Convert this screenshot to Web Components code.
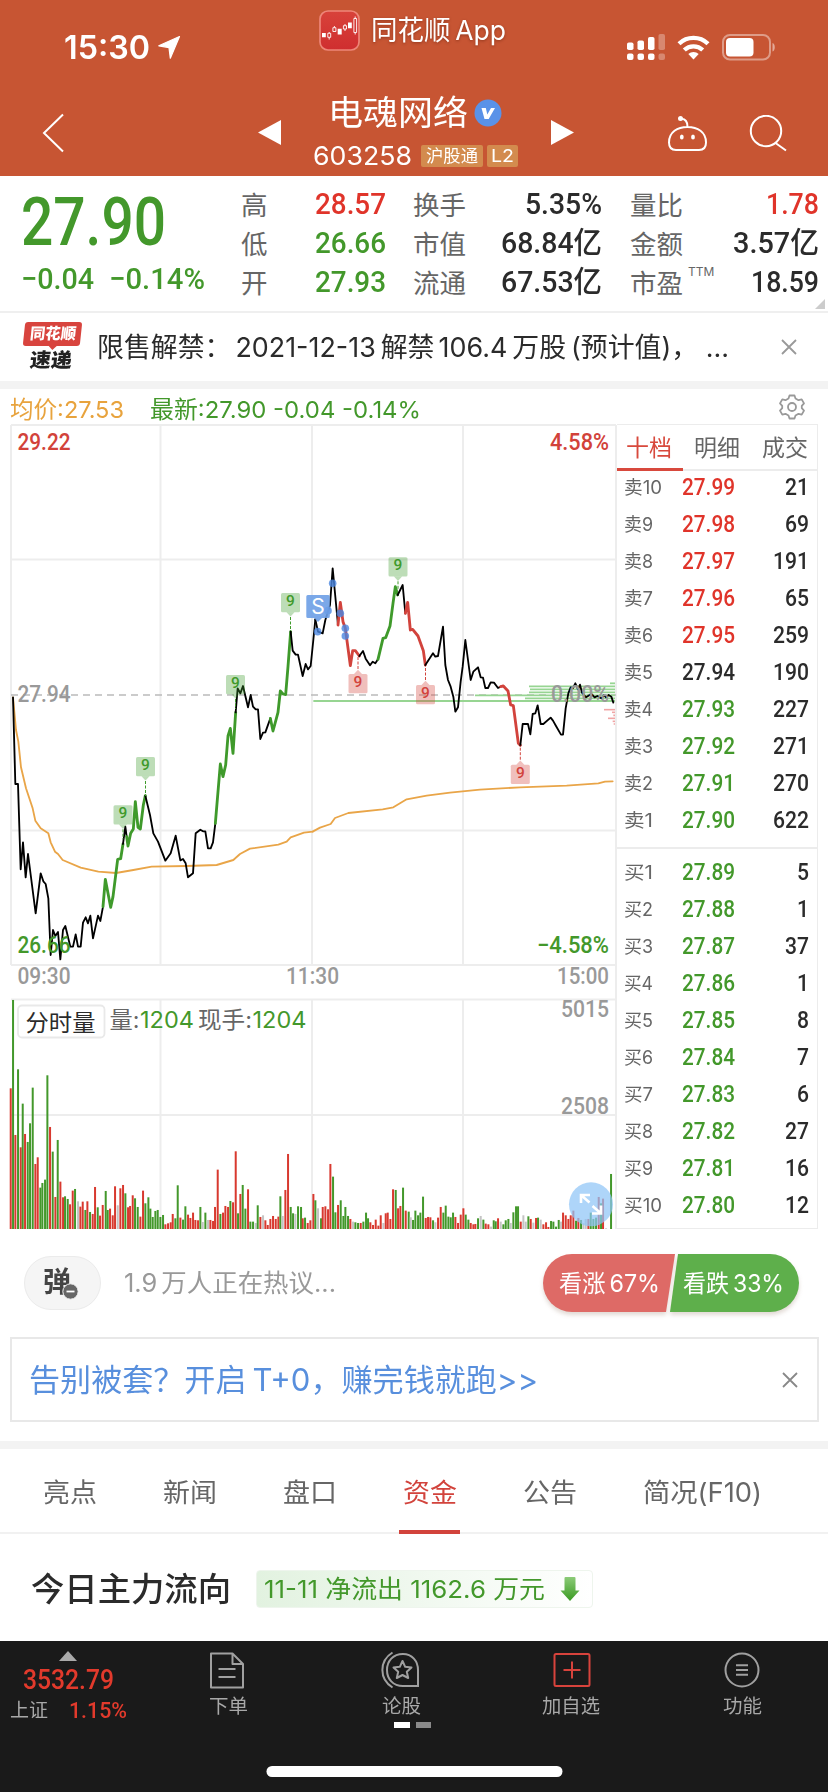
<!DOCTYPE html>
<html lang="zh-CN">
<head>
<meta charset="utf-8">
<title>电魂网络 603258</title>
<style>
html,body{margin:0;padding:0}
body{width:828px;height:1792px;overflow:hidden;background:#fff;
 --ui:Inter,"Noto Sans CJK SC",sans-serif;--num:Roboto,"Noto Sans CJK SC",sans-serif;
 --green:#43982b;--red:#e0342a;--line:#ececec;font-family:var(--ui);color:#2b2b2b}
</style>
</head>
<body>
<stock-page></stock-page>
<script>
class Piece extends HTMLElement{
  constructor(){
    super();
    this.attachShadow({mode:'open'}).innerHTML=
      '<style>*{box-sizing:border-box}svg{display:block;flex:none}.row{display:flex}fit-text{flex:none}'+this.css()+'</style>'+this.html();
  }
  css(){return ':host{display:block}'}
  html(){return ''}
}

/* whole screen, stacked top to bottom */
class StockPage extends Piece{
  css(){return `:host{display:flex;flex-direction:column;width:828px;height:1792px}
   .gap{height:8px;background:#f3f3f3;flex:none}.mid{display:flex;height:805px;flex:none}`}
  html(){return `<app-header></app-header><quote-panel></quote-panel><news-strip></news-strip><div class="gap"></div>
   <chart-legend></chart-legend><div class="mid"><price-chart></price-chart><order-book></order-book></div>
   <talk-bar></talk-bar><promo-box></promo-box><div class="gap" style="margin-top:19px"></div>
   <info-tabs></info-tabs><flow-row></flow-row><bottom-nav></bottom-nav>`}
}

class AppHeader extends Piece{
  css(){return `:host{display:block;height:176px;background:#c75533;color:#fff;flex:none}
   .a{height:82px;align-items:flex-start}.b{height:94px;align-items:flex-start}
   .t{line-height:40px;font-size:32px;font-weight:600;margin:28px 0 0 64px}
   .app{line-height:40px;font-size:27px;margin:11px 0 0 11px;text-shadow:0 1px 3px rgba(80,20,0,.45)}
   .name{line-height:40px;font-size:34.5px;font-weight:400}
   .c{width:208px;margin:11px 0 0 31px}.c .row:first-child{padding-left:16px}
   .code{line-height:24px;font-size:26px}.c .row+.row{margin-top:11px;align-items:center}
   .tag{background:#d38b4e;border-radius:2px;height:22px;line-height:22px;font-size:17.5px;display:flex;justify-content:center}`}
  html(){return `<div class="row a"><fit-text class="t" w="86">15:30</fit-text>
   <svg style="margin:35px 0 0 8px" width="23" height="24" viewBox="158 35 23 24"><path d="M179.5 36.5 158.8 45.8 169 47.6 170.3 58.2Z" fill="#fff" stroke="#fff" stroke-width="1.2" stroke-linejoin="round"/></svg>
   <svg style="margin:10px 0 0 138px" width="41" height="41" viewBox="319 10 41 41"><defs><linearGradient id="g" x2="0" y2="1"><stop stop-color="#d8423a"/><stop offset="1" stop-color="#cf2e2f"/></linearGradient></defs><rect x="320" y="11" width="39" height="39" rx="8" fill="url(#g)" stroke="#ee8679" stroke-width="1.700"/><g stroke="#fff" stroke-width=".9" fill="none"><path d="M329.200 32v1M329.200 37.500v2M334.400 26v1.500M345 24v1.500M345 29v2M355.200 16.500v2M355.200 32.500v2"/><path d="M327.800 33.300h2.900v4h-2.900zM332.900 27.700h3v3.800h-3zM343.400 25.700h3.100v3.300h-3.100zM353.900 18.500h2.700v14h-2.700z"/></g><path d="M322 33h3.800v4.300H322zM337.700 28.700h4v5.800h-4zM348 22.500h3.800v5.700H348z" fill="#fff"/></svg>
   <fit-text class="app" w="135">同花顺<span style="margin-left:5px">App</span></fit-text>
   <svg style="margin:32px 0 0 120px" width="150" height="30" viewBox="626 32 150 30"><g fill="#fff"><rect x="627" y="42.500" width="6.500" height="7.500" rx="1.800"/><rect x="637.500" y="40.500" width="6.500" height="9.500" rx="1.800"/><rect x="648" y="37" width="6.500" height="13" rx="1.800"/><rect x="658.500" y="34" width="6.500" height="16" rx="1.800" opacity=".3"/><rect x="627" y="53.500" width="6.500" height="6.500" rx="2"/><rect x="637.500" y="53.500" width="6.500" height="6.500" rx="2"/><rect x="648" y="53.500" width="6.500" height="6.500" rx="2"/><rect x="658.500" y="53.500" width="6.500" height="6.500" rx="2" opacity=".3"/><path d="M693.500 59.500 688.300 54a8 8 0 0 1 10.400 0z"/></g><g fill="none" stroke="#fff" stroke-width="4.300"><path d="M679 43.700a21 21 0 0 1 29 0"/><path d="M684.300 50a13.300 13.300 0 0 1 18.400 0"/></g><rect x="723" y="35" width="47" height="24.500" rx="7" fill="none" stroke="#fff" stroke-opacity=".42" stroke-width="2"/><rect x="726" y="38" width="27.500" height="18.500" rx="4" fill="#fff"/><path d="M772.500 43c3 1 3 7.500 0 8.500z" fill="#fff" opacity=".5"/></svg></div>
   <div class="row b">
   <svg style="margin:31px 0 0 42px" width="23" height="42" viewBox="42 113 23 42"><path d="M63 114.500 44 133 63 151.500" fill="none" stroke="#fff" stroke-width="2"/></svg>
   <svg style="margin:38px 0 0 193px" width="23" height="26" viewBox="0 0 23 26"><path d="M0 12.500 23 0v25z" fill="#fff"/></svg>
   <div class="c"><div class="row"><fit-text class="name" w="140">电魂网络</fit-text><svg style="margin:6px 0 0 6px" width="28" height="28" viewBox="0 0 28 28"><circle cx="14" cy="14" r="13.500" fill="#5a92e8"/><path d="M7.500 9h4.300l1.500 6.500 3.700-6.500h4l-6.300 11h-4.200z" fill="#fff"/></svg></div>
   <div class="row"><fit-text class="code" w="99" style="margin-left:1px">603258</fit-text><div class="tag" style="width:62px;margin-left:9px"><fit-text w="52">沪股通</fit-text></div><div class="tag" style="width:31px;margin-left:4px"><fit-text w="23">L2</fit-text></div></div></div>
   <svg style="margin:38px 0 0 31px" width="23" height="26" viewBox="0 0 23 26"><path d="M23 12.500 0 0v25z" fill="#fff"/></svg>
   <svg style="margin:33px 0 0 91px" width="125" height="38" viewBox="664 115 125 38"><g fill="none" stroke="#fff" stroke-width="2"><path d="M686.500 127c-10 0-18.500 5-18.500 15.500 0 5 2.500 7.500 7 7.500h23c4.500 0 7-2.500 7-7.500 0-10.500-8.500-15.500-18.500-15.500zM686.500 127c0-5.500-1.500-8-6-8.200"/><circle cx="765" cy="131" r="15.200"/><path d="M774.500 143 785 150.500"/></g><circle cx="679.500" cy="118.500" r="2.500" fill="#fff"/><g fill="#fff"><ellipse cx="680.800" cy="137" rx="1.900" ry="2.600"/><ellipse cx="692" cy="137" rx="1.900" ry="2.600"/></g></svg></div>`}
}

class QuotePanel extends Piece{
  css(){return `:host{display:flex;height:137px;border-bottom:2px solid #efefef;flex:none;position:relative;font-family:var(--num);font-weight:500}
   .l{width:241px;padding:9px 0 0 21px;color:var(--green)}
   .big{font-size:66px;line-height:76px}.chg{font-size:30px;line-height:36px;margin-top:0}.l .row{gap:15px}
   .g{padding-top:9px}.g div{display:flex;justify-content:space-between;height:38.8px;line-height:38.800px;font-size:30px}
   .g span{font:400 26.5px/38.800px var(--ui);color:#666;padding-top:1px;white-space:nowrap}
   sup{font-size:12px;line-height:12px;vertical-align:17px;margin-left:5px}
   i{position:absolute;right:3px;bottom:2px;border:5px solid transparent;border-right-color:#ccc;border-bottom-color:#ccc}
   .r{color:var(--red)}.n{color:var(--green)}`}
  html(){
    const g=(x,w,rows)=>`<div class="g" style="width:${w}px;margin-left:${x}px">`+rows.map(r=>`<div><span>${r[0]}</span><fit-text class="${r[3]||''}" w="${r[2]}">${r[1]}</fit-text></div>`).join('')+'</div>';
    return `<div class="l"><fit-text class="big" w="145">27.90</fit-text><div class="row chg"><fit-text w="73">−0.04</fit-text><fit-text w="96">−0.14%</fit-text></div></div>`+
    g(0,145,[['高','28.57',71,'r'],['低','26.66',71,'n'],['开','27.93',71,'n']])+
    g(27,189,[['换手','5.35%',77],['市值','68.84亿',101],['流通','67.53亿',101]])+
    g(28,189,[['量比','1.78',53,'r'],['金额','3.57亿',86],['市盈<sup>TTM</sup>','18.59',68]])+'<i></i>'}
}

class NewsStrip extends Piece{
  css(){return `:host{display:flex;height:68px;flex:none;align-items:center}
   .logo{width:58px;height:50px;margin-left:24px}
   .up{height:24px;width:57px;background:#d8443e;transform:skewX(-6deg);border-radius:3px;color:#fff;font:900 15.500px/24px var(--ui);display:flex;justify-content:center;position:relative}
   .up:after{content:"";position:absolute;left:26px;top:24px;border:4px solid transparent;border-top-color:#d8443e;border-bottom:0}
   .dn{font:900 19.5px/22px var(--ui);color:#222;transform:skewX(-6deg);margin:3px 0 0 6px}
   .txt{font-size:27px;line-height:40px;margin:1px 0 0 15px}b{font-weight:400;margin:0 5px 0 4px}`}
  html(){return `<div class="logo"><div class="up"><fit-text w="46">同花顺</fit-text></div><fit-text class="dn" w="42">速递</fit-text></div>
   <fit-text class="txt" w="632">限售解禁：<b>2021-12-13</b>解禁<b>106.4</b>万股<span style="margin-left:5px">(预计值)，</span> ...</fit-text>
   <svg style="margin-left:51px" width="18" height="18" viewBox="0 0 18 18"><path d="M2 2 16 16M16 2 2 16" stroke="#999" stroke-width="1.800"/></svg>`}
}

class ChartLegend extends Piece{
  css(){return `:host{display:flex;height:35px;flex:none;font-size:23.500px;line-height:42px;padding-left:10px;color:var(--green)}`}
  html(){return `<fit-text w="114" style="color:#e8a33d">均价:27.53</fit-text><fit-text w="271" style="margin-left:26px">最新:27.90 -0.04 -0.14%</fit-text>
   <svg style="margin:4px 0 0 357px" width="28" height="28" viewBox="-14 -14 28 28"><g fill="none" stroke="#999" stroke-width="1.800" stroke-linejoin="round"><path d="M-2.500-11.500h5l1 3 3 1.700 3.200-.8 2.300 4-2.200 2.400v2.400l2.200 2.400-2.300 4-3.200-.8-3 1.700-1 3h-5l-1-3-3-1.700-3.200.8-2.300-4 2.200-2.400v-2.400l-2.200-2.400 2.300-4 3.200.8 3-1.700z"/><circle r="4"/></g></svg>`}
}

class PriceChart extends Piece{
  css(){return `:host{display:block;width:617px;height:805px;flex:none}
   text{font-family:var(--num);font-weight:500;font-size:23.500px}.ui{font-family:var(--ui);font-weight:400;font-size:23px}`}
  html(){
    // traces are drawn in three-times units; the origin differs for each block
    const K='#000',G='#3f9a2b',R='#d2433c';
    const L=(c,p,w)=>`<polyline points="${p}" stroke="${c}" stroke-width="${w||(c==K?5.5:8.5)}"/>`;
    const blk=(x,y,s)=>`<g transform="translate(${x} ${y}) scale(.33333)" fill="none" stroke-linejoin="round" stroke-linecap="round">${s}</g>`;
    const left=blk(0,680,
     L('#e9a548','39,52 48,150 55,185 63,262 78,325 98,385 106,422 122,445 145,460 152,487 165,515 174,522 188,540 242,563 295,575 348,579 400,570 455,560 560,558 650,555 700,540 720,522 750,506 835,494 860,485 872,472 912,458 938,455',5.5)+
     L(K,'39,52 46,312 54,312 62,568 69,487 77,592 84,522 107,700 122,580 130,604 137,612 145,655 152,825 159,750 166,768 174,756 181,838 189,750 196,738 211,800 219,800 227,763 234,800 242,800 249,728 257,712 264,730 271,707 279,775 294,707 301,723 309,680')+
     L(G,'309,680 316,598 332,682 339,650 353,538 362,536 369,492')+L(K,'369,492 376,440 380,470')+
     L(G,'380,470 384,498 392,460 400,447 406,365 414,442 421,447 430,375 436,347')+
     L(K,'436,347 450,405 460,460 474,485 496,542 512,520 527,467 541,541 549,537 557,550 564,592 579,580 587,460 601,449 609,454 616,454 624,505 632,505 639,487 646,430')+
     L(G,'646,430 661,252 669,290 677,255 684,168 691,145 699,220 707,97')+
     L(K,'707,97 713,25 721,40 729,18 744,82 752,45 759,80 767,88 774,88 781,177 789,158 796,157 811,115')+
     L(G,'811,115 819,153 834,97 841,33 849,42 857,44 864,-40 872,-145')+
     L(K,'872,-145 878,-88 887,-76 894,-76 908,-12 917,-48 924,-32 932,-42 940,-120 946,-182'));
    const right=blk(300,420,
     L('#e9a548','38,1235 60,1223 92,1212 105,1194 145,1179 248,1168 280,1162 300,1150 320,1138 380,1127 450,1118 540,1109 660,1102 800,1097 895,1090 915,1085 938,1084',5.5)+
     L(K,'46,598 54,635 68,640 76,600 90,555 98,445 114,615')+L(R,'114,615 121,547 129,605 136,625 151,737 158,692 166,692 178,708')+
     L(K,'178,708 189,693 197,716 210,736 218,725 226,730 234,718')+L(G,'234,718 249,655 257,653 270,618 279,550 286,500 293,525')+
     L(K,'293,525 308,495 316,580')+L(R,'316,580 323,547 331,630 338,628 354,648 370,692 376,735')+
     L(K,'376,735 399,700 406,710 414,708 429,620 436,735 444,780 452,800 460,830 466,875 474,862 482,785 488,740 496,660 512,780 520,755 534,742 542,772 549,773 556,804 564,804 572,787 582,788 594,804 602,800')+
     L(R,'602,800 610,798 624,813 632,855 640,857 655,970 661,976')+
     L(K,'661,976 668,912 684,912 691,943 698,882 706,880 713,856 722,912 730,912 752,893 759,902 768,918 783,944 789,944 797,865 805,820 812,802 819,804 826,790 834,808 840,794 846,818 858,832 874,822 884,832 892,828 905,835 912,825 918,832 926,825 934,830 940,848'));
    const dots=[[53,635],[98,490],[84,572],[121,580],[136,625],[136,648]].map(d=>`<circle cx="${300+d[0]/3}" cy="${420+d[1]/3}" r="3.800" fill="#4a86e0" fill-opacity=".8"/>`).join('');
    const tip=(x,y,up,len)=>{const c=up?'#3f9a2b':'#d2433c',m=up?y+19:y;
      return `<rect x="${x-9.5}" y="${y}" width="19" height="19.300" rx="1.500" fill="${c}" fill-opacity=".34"/>`+
       (up?`<path d="M${x-4} ${m+.3}h8l-4 4.300z" fill="${c}" fill-opacity=".34"/><path d="M${x} ${m+5}v${len}" stroke="${c}" stroke-dasharray="3 1.500"/>`:
        `<path d="M${x-4} ${m}h8l-4-4.300z" fill="${c}" fill-opacity=".34"/><path d="M${x} ${m-5}v${-len}" stroke="${c}" stroke-dasharray="3 1.500"/>`)+
       `<text x="${x}" y="${y+13}" text-anchor="middle" style="font-size:15.5px" fill="${c}">9</text>`};
    const tips=tip(290.500,593,1,14)+tip(235.500,675,1,10)+tip(145.500,757,1,15)+tip(123,805.300,1,10)+tip(398,557.300,1,8)+tip(358,674,0,12)+tip(425.500,685,0,14)+tip(520.300,764.700,0,14);
    const ob='<g stroke="#97d592" stroke-width="1.800">'+[[40,843],[525,826],[687,799],[690,808],[687,817],[675,835],[930,790]].map(d=>`<path d="M${300+d[0]/3} ${420+d[1]/3}H615"/>`).join('')+'</g><g stroke="#f0a5a5" stroke-width="1.600">'+[[912,869],[936,877],[940,886],[924,895],[938,904],[941,912]].map(d=>`<path d="M${300+d[0]/3} ${420+d[1]/3}H615"/>`).join('')+'</g>';
    const v1='32r325 39g60 46r465 54g268 62r502 68g371 75r462 83g486 90g430 98g323 106r552 113r532 121g623 127g609 135g599 142g286 150r441 158g515 166r651 173g480 181r605 189r652 195g649 203g657 210r673 218r632 225g627 234y664 241r680 248r665 256g690 262r664 270g696 278r702 285r621 293g682 300r707 308r675 317g633 323g690 330r686 338r706 345r619 353y676 361r625 369r615 376g640 384r682 390r678 398r646 405g655 413g681 421r710 429r632 436g670 445g652 451g686 458g711 466g693 473g690 481g711 489g705 496r733 504r730 512r727 518r702 526g715 533g616 541r713 549g719 556g679 564r704 571r714 579r698 586r720 594r721 601g681 608y726 616g698 624y720 631r720 639r723 645r681 653r569 661g702 669r698 676r678 684r681 691g663 699r667 707r514 714g700 721r642 728g615 736g686 744r628 751g725 759g725 767y729 773g676 781r711 789y706 796r721 803r735 811r717 819r708 827r717 835r710 841g649 848y708 856r630 864r522 872g681 879g700 886y702 894g679 903g681 908r715 915g713 923r729 931r721';
    const v2='40r642 46g661 54y685 63g715 68r681 76r679 84r688 91r552 99g590 106g697 114r675 122g661 130g708 136g681 144g708 151r717 159y725 166g727 174g729 182r729 190g725 198g698 204g715 211r727 219r735 227r719 235r737 242r706 250y729 257r700 263r698 271r717 279r628 287g630 294r685 301r678 309g623 317r692 326g695 332y712 339g720 346g692 354g706 361g698 369g650 377r714 384r711 391r712 399g721 406y727 414r713 422r681 430g698 437g677 445g710 452g712 459g698 466r711 474r729 482r704 490r685 497g704 505g719 512r729 520r733 526r732 534g715 542y708 550g719 557r731 565r733 573y740 581g721 587g724 594r715 602y725 610g733 617g721 625g717 632y729 640g697 648g679 654g679 662r725 670y706 677y725 685g709 692r717 700y728 708r714 714g713 722y719 730r733 738r727 745r741 753g723 760g725 768g740 776g720 783y725 789r698 797r706 805r717 812r706 820r692 828g722 835r714 843g720 850y730 857y717 865r717 872g698 880g717 888g713 896r651 903g670 909r656 918y745 933g582';
    const bars=(s,x0)=>s.split(' ').map(b=>{const m=b.match(/(\d+)([rgy])(\d+)/),h=(748-m[3])/3;
      return `<rect x="${(x0+m[1]/3-.95).toFixed(2)}" y="${(1229.300-h).toFixed(2)}" width="2" height="${h.toFixed(2)}" fill="${{r:'#d8392f',g:'#43982b',y:'#c4c4c4'}[m[2]]}"/>`}).join('');
    const T=(x,y,w,t,c,k='')=>`<text x="${x}" y="${y}" textLength="${w}" lengthAdjust="spacingAndGlyphs" fill="${c}" class="${k}">${t}</text>`;
    const g='#999';
    return `<svg width="617" height="805" viewBox="0 424 617 805">
     <g stroke="#ededed" stroke-width="2" fill="none"><path d="M11 425H616M11 559.500H616M11 830.500H616M11 965H616M11 425V965M160.500 425V965M312 425V965M463 425V965M616 425V1229M11 999.500H616M11 1115H616M160.500 999V1229M312 999V1229M463 999V1229"/></g>
     <path d="M11 695H616" stroke="#bbb" stroke-width="1.500" stroke-dasharray="7 5"/>
     ${ob}${left}${right}${dots}${tips}
     <path d="M307.800 595h20.500a1.500 1.500 0 0 1 1.500 1.500v20a1.500 1.500 0 0 1-1.500 1.500H322l-4 4-4-4h-6.200a1.500 1.500 0 0 1-1.500-1.500v-20a1.500 1.500 0 0 1 1.500-1.500z" fill="#6d9fe6" fill-opacity=".9"/>
     <text class="ui" x="318" y="614" text-anchor="middle" style="font-size:21px" fill="#fff">S</text>
     ${T(17.500,450.300,53,'29.22','#d2423a')}${T(550,450.300,59,'4.58%','#d2423a')}${T(17.500,702.300,53,'27.94',g)}${T(551,702.300,58,'0.00%',g)}
     ${T(17.500,953.300,53,'26.66','#43982b')}${T(537,953.300,72,'−4.58%','#43982b')}${T(17.500,984.200,53,'09:30',g)}${T(286,984.200,53,'11:30',g)}${T(557,984.200,52,'15:00',g)}
     ${bars(v1,0)}${bars(v2,300)}
     ${T(561,1017.300,48,'5015',g)}${T(561,1114.300,48,'2508',g)}
     <rect x="18" y="1005.500" width="86.500" height="32" rx="4" fill="#fff" stroke="#e9e9e9" stroke-width="1.800"/>
     ${T(25.500,1030.500,70,'分时量','#2b2b2b','ui')}${T(109.500,1028,30,'量:','#666','ui')}${T(140,1028,54,'1204','#43982b','ui')}${T(198,1028,54,'现手:','#666','ui')}${T(252.500,1028,54,'1204','#43982b','ui')}
     <circle cx="591" cy="1204.300" r="22" fill="#8fc5f6" fill-opacity=".72"/>
     <g fill="none" stroke="#fff" stroke-width="2.600"><path d="M581 1203v-8h9M581.500 1195.500l8 7M601 1205.500v8h-9M600.500 1213l-8-7"/></g></svg>`}
}

class OrderBook extends Piece{
  css(){return `:host{display:block;width:201px;height:805px;border:1.5px solid #ececec;border-left:0;flex:none}
   .tabs{display:flex;height:46px;border-bottom:2px solid #ececec;font-size:22.500px;line-height:46px;color:#666;padding-left:9px;position:relative}
   .tabs fit-text+fit-text{margin-left:22px}.tabs i{position:absolute;left:0;bottom:-2px;width:66px;height:3.5px;background:#d8493d}
   .q{display:flex;height:37.05px;line-height:37px;padding-right:8px;font:500 24.5px/35.500px var(--num)}
   .q .n{font:400 18px/38px var(--ui);color:#666;margin-left:6.500px}
   .q>div:first-child{width:64.500px}.q>fit-text:last-child{margin-left:auto;color:#2b2b2b}
   .cut{height:2px;background:#ececec;margin:8px 0 5px}.ask{margin-top:-2.5px}`}
  html(){
    const row=(n,p,v)=>`<div class="q" style="color:${p>'27.94'?'var(--red)':p<'27.94'?'var(--green)':'#2b2b2b'}"><div><fit-text class="n" w="${n.length==3?38:29}">${n}</fit-text></div><fit-text w="53">${p}</fit-text><fit-text w="${v.length*12}">${v}</fit-text></div>`;
    const a=['21','69','191','65','259','190','227','271','270','622'],b=['5','1','37','1','8','7','6','27','16','12'];
    return `<div class="tabs"><fit-text w="46" style="color:#d8493d">十档</fit-text><fit-text w="46">明细</fit-text><fit-text w="46">成交</fit-text><i></i></div>
     <div class="ask">${a.map((v,i)=>row('卖'+(10-i),(27.99-i*.01).toFixed(2),v)).join('')}</div><div class="cut"></div>
     ${b.map((v,i)=>row('买'+(i+1),(27.89-i*.01).toFixed(2),v)).join('')}`}
}

class TalkBar extends Piece{
  css(){return `:host{display:flex;height:108px;flex:none;padding-top:25px}
   .pill{width:77px;height:54px;margin:2px 0 0 24px;border-radius:27px;background:#f5f5f5;border:1.5px solid #ebebeb;position:relative;color:#444;font:700 28px/50px var(--ui);padding-left:18px}
   .pill svg{position:absolute;left:37px;top:26px}
   .t{font-size:25px;line-height:58px;color:#999;margin-left:23px}
   .bet{display:flex;width:256px;height:58px;margin-left:auto;margin-right:29px;filter:drop-shadow(0 3px 2px rgba(120,80,60,.22));color:#fff;font-size:24px;line-height:59px}
   .bet div{height:58px}.u{width:132px;background:#de6a66;border-radius:29px 0 0 29px;clip-path:polygon(0 0,100% 0,123px 100%,0 100%);padding-left:16px}
   .d{width:129px;margin-left:-5px;background:#5eaf4b;border-radius:0 29px 29px 0;clip-path:polygon(8px 0,100% 0,100% 100%,0 100%);padding-left:13px}`}
  html(){return `<div class="pill"><fit-text w="28">弹</fit-text><svg width="17" height="17" viewBox="0 0 17 17"><circle cx="8.500" cy="8.500" r="7.700" fill="#666" stroke="#f5f5f5"/><path d="M4.500 8.500h8" stroke="#fff" stroke-width="1.800"/></svg></div>
   <fit-text class="t" w="212"><span style="margin-right:4px">1.9</span>万人正在热议...</fit-text>
   <div class="bet"><div class="u"><fit-text w="101">看涨<span style="margin-left:4px">67%</span></fit-text></div><div class="d"><fit-text w="101">看跌<span style="margin-left:4px">33%</span></fit-text></div></div>`}
}

class PromoBox extends Piece{
  css(){return `:host{display:flex;align-items:center;justify-content:space-between;width:809px;height:85px;margin:0 0 0 10px;border:2px solid #e8e8e8;flex:none;color:#588fdd;font-size:31px;line-height:44px;padding:0 18px 0 17px}`}
  html(){return `<fit-text w="509">告别被套？开启<span style="margin-left:6px">T+0，</span>赚完钱就跑&gt;&gt;</fit-text><svg width="18" height="18" viewBox="0 0 18 18"><path d="M2 2 16 16M16 2 2 16" stroke="#888" stroke-width="1.800"/></svg>`}
}

class InfoTabs extends Piece{
  css(){return `:host{display:flex;height:85px;border-bottom:2px solid #f1f1f1;flex:none;font-size:26.500px;line-height:86px;color:#666;padding-left:43px;gap:66px}
   .on{color:#d2433c;position:relative}.on i{position:absolute;left:-4px;bottom:-2px;width:61px;height:4px;background:#d2433c}`}
  html(){return ['亮点','新闻','盘口','资金','公告','简况(F10)'].map((t,i)=>`<div class="${i==3?'on':''}"><fit-text w="${i==5?119:54}">${t}</fit-text>${i==3?'<i></i>':''}</div>`).join('')}
}

class FlowRow extends Piece{
  css(){return `:host{display:flex;height:107px;flex:none;align-items:center;padding:3px 0 0 31px}
   .h{font-size:33px;font-weight:500;line-height:50px}
   .tag{display:flex;align-items:center;width:337px;height:38px;margin-left:25px;padding-left:7px;border:1.500px solid #eef5ed;border-radius:4px;background:linear-gradient(90deg,#e2f2e0,#fff);color:var(--green);font-size:24.500px;line-height:36px}`}
  html(){return `<fit-text class="h" w="200">今日主力流向</fit-text><div class="tag"><fit-text w="281">11-11 净流出 1162.6 万元</fit-text>
   <svg style="margin-left:15px" width="20" height="24" viewBox="0 0 20 24"><defs><linearGradient id="a" x2="0" y2="1"><stop stop-color="#8ccb78"/><stop offset="1" stop-color="#3a9a22"/></linearGradient></defs><path d="M5.500 0h9q1 0 1 1v12.500h4L10 24 .5 13.500h4V1q0-1 1-1z" fill="url(#a)"/></svg></div>`}
}

class BottomNav extends Piece{
  css(){return `:host{display:block;height:151px;background:#1a1a1a;flex:none;color:#a8a8a8;font-size:19px}
   .bar{display:flex;height:81px}.ix{width:140px;padding-top:10px}.ix>fit-text,.ix .row{font-family:var(--num);font-weight:500;color:#e23a2c}
   .v{font-size:28px;line-height:34px;margin:2px 0 0 23px}.ix .row{font-size:22.500px;line-height:28px;margin:-1px 0 0 10px}
   .it{display:flex;flex-direction:column;align-items:center;padding-top:10px}.it fit-text{line-height:28px;margin-top:4px}
   .dots{gap:6px;padding-left:394px}.dots i{width:15.500px;height:6px;background:#fff}.dots i+i{background:#8a8a8a}
   .home{width:296px;height:11px;border-radius:6px;background:#fff;margin:38px auto 0;transform:translateX(.5px)}`}
  html(){
    const it=(x,w,n,s)=>`<div class="it" style="width:${w}px;margin-left:${x}px"><svg width="40" height="38" viewBox="-20 -19 40 38" fill="none" stroke="#a0a0a0" stroke-width="2">${s}</svg><fit-text w="${n.length*19+1}">${n}</fit-text></div>`;
    return `<div class="bar"><div class="ix"><svg style="margin-left:59px" width="18" height="10" viewBox="0 0 18 10"><path d="M9 0 18 10H0z" fill="#aaa"/></svg><fit-text class="v" w="91">3532.79</fit-text><div class="row"><fit-text w="38" style="font:400 19px/30px var(--ui);color:#a8a8a8">上证</fit-text><fit-text w="58" style="margin-left:21px">1.15%</fit-text></div></div>`+
     it(58,60,'下单','<path d="M-17-16.500H4.500L15-6V17.500H-17zM4.500-16.500V-6H15M-9.500-1H7.500M-9.500 7H7.500" stroke-linejoin="round"/>')+
     it(113,60,'论股','<path d="M-8.500-17.500C-22-9-22 9-8.500 17.500M2-16C-8-16-14-9-14 0S-8 16 2 16H17V0C17-9 11-16 2-16z"/><path d="M1.500-9 4.200-3.200 10.500-2.500 5.800 1.800 7.200 8 1.500 5-4.200 8-2.800 1.800-7.500-2.500-1.200-3.200z" stroke-linejoin="round"/>')+
     it(110,60,'加自选','<g stroke="#d8433c"><rect x="-16.500" y="-16" width="35" height="32" rx="1.500"/><path d="M1-8.500V8.500M-7.500 0H9.500"/></g>')+
     it(111,60,'功能','<circle r="16.500"/><path d="M-6-4.800H6M-6 0H6M-6 4.800H6"/>')+
     `</div><div class="row dots"><i></i><i></i></div><div class="home"></div>`}
}

/* single line of text set to an exact advance width */
class FitText extends HTMLElement{
  constructor(){super();this.attachShadow({mode:'open'}).innerHTML=
    '<style>:host{display:block;white-space:nowrap}span{display:inline-block;vertical-align:top;transform-origin:0 50%}</style><span><slot></slot></span>'}
  connectedCallback(){
    const w=+this.getAttribute('w'),s=this.shadowRoot.querySelector('span');
    this.style.width=w+'px';
    const n=s.offsetWidth&&parseFloat(getComputedStyle(s).width);
    if(n)s.style.transform=`scaleX(${w/n})`;
  }
}
[['bottom-nav',BottomNav],['flow-row',FlowRow],['info-tabs',InfoTabs],['promo-box',PromoBox],['talk-bar',TalkBar],['order-book',OrderBook],['price-chart',PriceChart],['chart-legend',ChartLegend],['news-strip',NewsStrip],['quote-panel',QuotePanel],['app-header',AppHeader],['stock-page',StockPage],['fit-text',FitText]].forEach(d=>customElements.define(...d));
</script>
</body>
</html>
